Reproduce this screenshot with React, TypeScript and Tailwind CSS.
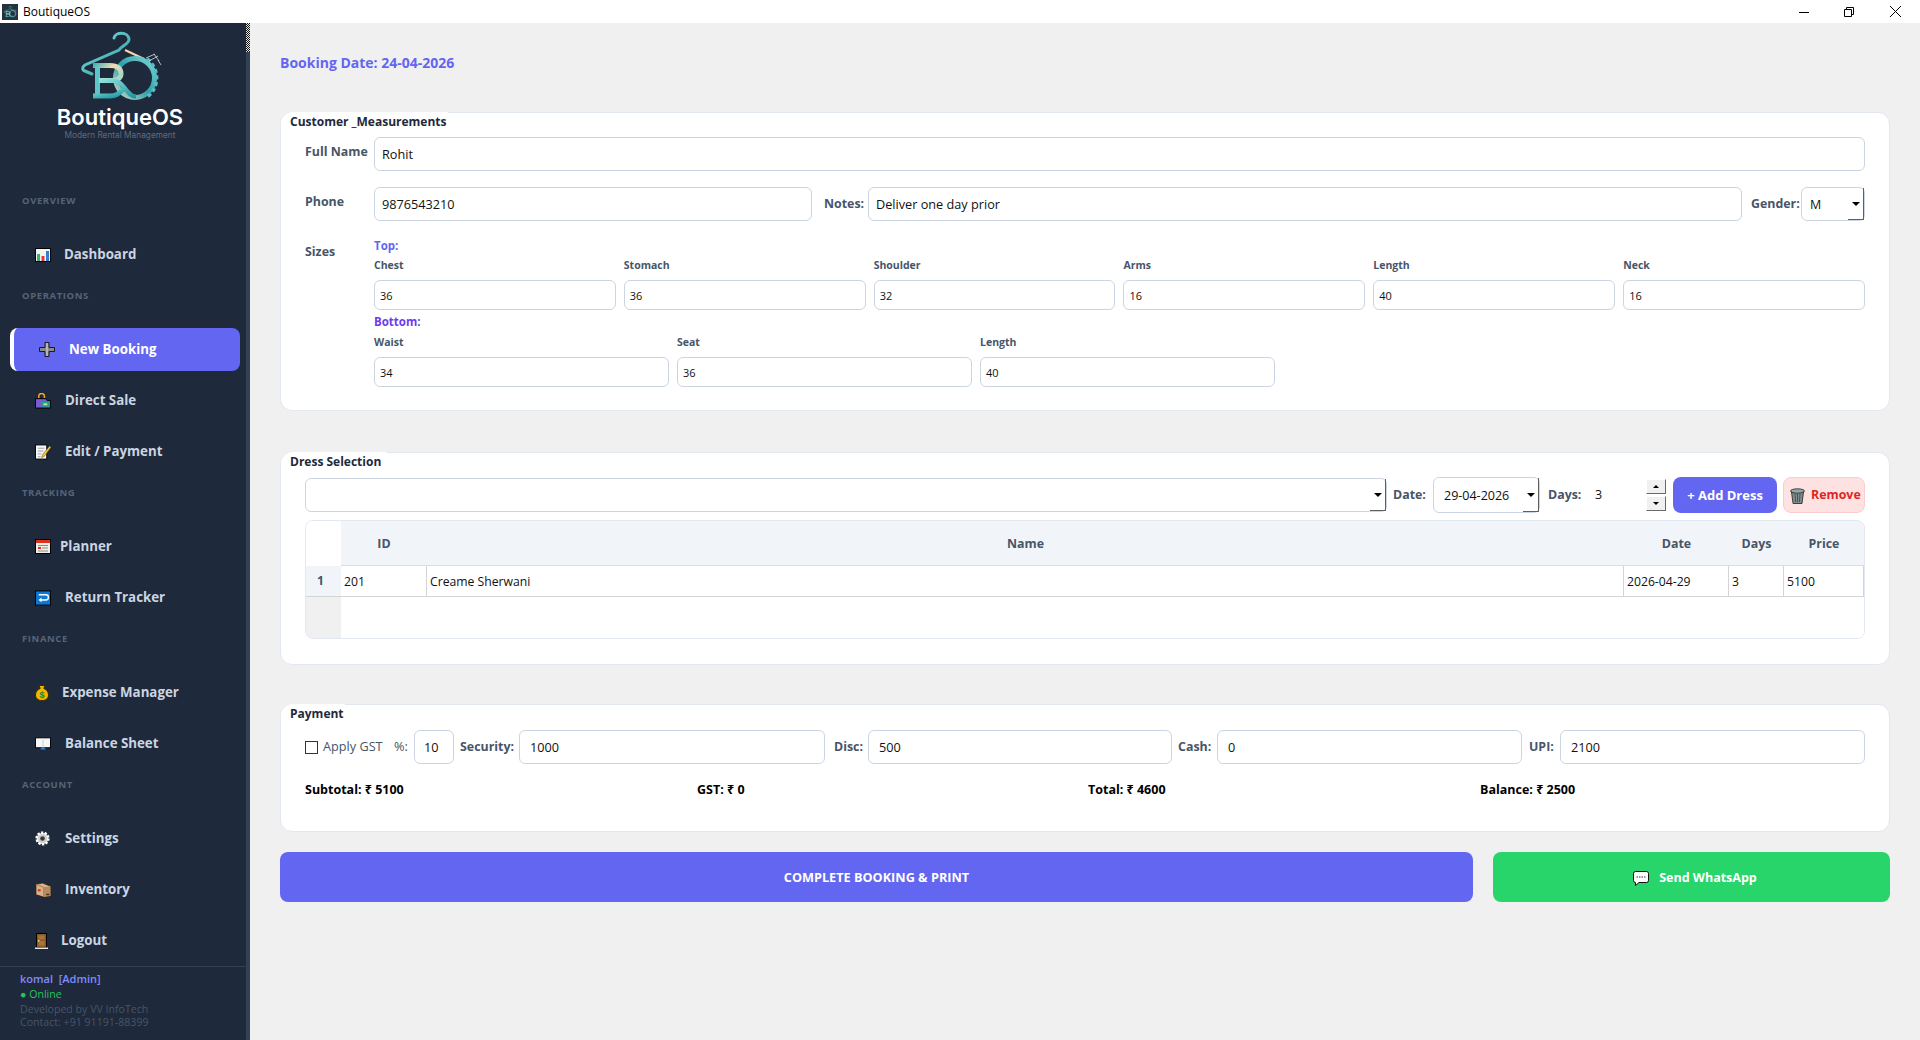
import type { ReactNode } from "react";

// small hand drawn glyphs, Windows style emoji at 16px
const DashboardIcon = () => (
  <svg width="16" height="14" viewBox="0 0 16 14">
    <rect x="0.5" y="0.5" width="15" height="13" fill="#f4f4f4" stroke="#000" />
    <rect x="2" y="6" width="3" height="7" fill="#2eb872" />
    <rect x="6.5" y="8" width="3" height="5" fill="#e53935" />
    <rect x="11" y="3" width="3" height="10" fill="#2f7fd6" />
  </svg>
);
const PlusIcon = () => (
  <svg width="16" height="15" viewBox="0 0 16 15">
    <path d="M6 0.5h4v5h5.5v4H10v5H6v-5H0.5v-4H6z" fill="#8a8a8a" stroke="#1a1a1a" />
    <rect x="7" y="1" width="2" height="13" fill="#b5b5b5" />
  </svg>
);
const BagIcon = () => (
  <svg width="17" height="16" viewBox="0 0 17 16">
    <path d="M4 5V3a3 3 0 0 1 6 0v2" fill="none" stroke="#f5a623" strokeWidth="1.6" />
    <path d="M0.5 5.5H11l2 2 3.5 0V15.5H0.5z" fill="#7a5bd0" stroke="#000" />
    <rect x="7" y="9" width="8" height="5" fill="#1aa58c" />
    <rect x="9" y="10.5" width="4" height="2" fill="#b8e986" />
  </svg>
);
const MemoIcon = () => (
  <svg width="17" height="16" viewBox="0 0 17 16">
    <rect x="0.5" y="0.5" width="12" height="15" fill="#f7f7f7" stroke="#000" />
    <path d="M3 4h7M3 7h6M3 10h4M3 13h3" stroke="#9b9b9b" />
    <path d="M15.5 1.5 8 11l-1 3 3-1.5L17 3z" fill="#f5c242" stroke="#5a4200" strokeWidth="0.5" />
  </svg>
);
const CalendarIcon = () => (
  <svg width="16" height="15" viewBox="0 0 16 15">
    <rect x="0.5" y="0.5" width="15" height="14" fill="#f4efe6" stroke="#000" />
    <rect x="1" y="1" width="14" height="3" fill="#e0301e" />
    <path d="M3 6.5h10M7 9h6M3 12h10" stroke="#8c8c8c" />
    <rect x="3" y="8" width="3" height="2" fill="#e0301e" />
  </svg>
);
const ReturnIcon = () => (
  <svg width="17" height="16" viewBox="0 0 17 16">
    <rect x="0.5" y="0.5" width="16" height="15" fill="#0b78d6" stroke="#000" />
    <path d="M4 4.5h7.5a2.8 2.8 0 0 1 0 5.6H5" fill="none" stroke="#fff" strokeWidth="1.5" />
    <path d="M7 7.6 3.8 10.1 7 12.6z" fill="#fff" />
  </svg>
);
const MoneyIcon = () => (
  <svg width="14" height="16" viewBox="0 0 14 16">
    <path d="M4 0.5h6L8.8 3.5c3 1 4.7 3.5 4.7 6.5 0 3.5-2.7 5.5-6.5 5.5S0.5 13.500 0.5 10c0-3 1.7-5.5 4.7-6.5z" fill="#f4b400" stroke="#3a2a00" />
    <text x="7" y="13" textAnchor="middle" fontSize="9" fontWeight="700" fill="#0b8a3a" fontFamily="Liberation Sans, sans-serif">$</text>
  </svg>
);
const BookIcon = () => (
  <svg width="17" height="13" viewBox="0 0 17 13">
    <rect x="0.5" y="0.5" width="16" height="10.5" fill="#f8f8f8" stroke="#000" />
    <rect x="6" y="11" width="5" height="2" fill="#2f7fd6" />
    <path d="M8.5 1v10" stroke="#d0d0d0" />
  </svg>
);
const GearIcon = () => (
  <svg width="15" height="15" viewBox="0 0 15 15">
    <circle cx="7.5" cy="7.5" r="5.8" fill="#dcdcdc" stroke="#fff" strokeWidth="2.6" strokeDasharray="2.2 1.4" />
    <circle cx="7.5" cy="7.5" r="4.6" fill="#cfcfcf" />
    <circle cx="7.5" cy="7.5" r="2.3" fill="#3a3a3a" />
  </svg>
);
const BoxIcon = () => (
  <svg width="17" height="16" viewBox="0 0 17 16">
    <path d="M1 2 8 0.5 16.5 4v10.5L9 15.5 1 13z" fill="#d9b48a" stroke="#2b1c0c" strokeWidth="0.8" />
    <path d="M1 2 9 5v10.5" fill="none" stroke="#a67c52" />
    <path d="M9 5 16.5 4v10.5L9 15.5z" fill="#b88b5e" />
    <rect x="3" y="7" width="3" height="2.5" fill="#e0304a" />
    <rect x="12" y="12" width="3" height="1.5" fill="#3d2a18" />
  </svg>
);
const DoorIcon = () => (
  <svg width="13" height="16" viewBox="0 0 13 16">
    <rect x="1.5" y="0.5" width="10" height="14" fill="#8b5a2b" stroke="#000" />
    <rect x="3.5" y="2.5" width="6" height="4" fill="#a9743c" />
    <rect x="3.5" y="8" width="6" height="4.5" fill="#a9743c" />
    <rect x="3" y="7" width="1.5" height="1.5" fill="#f5d76e" />
    <rect x="0" y="14.5" width="13" height="1.5" fill="#e8e8e8" />
  </svg>
);
const TrashIcon = () => (
  <svg width="15" height="16" viewBox="0 0 15 16">
    <path d="M1.5 4 3 15.5h9L13.5 4z" fill="#7f8c8d" stroke="#222" strokeWidth="0.8" />
    <ellipse cx="7.5" cy="3" rx="7" ry="2.2" fill="#95a5a6" stroke="#222" strokeWidth="0.8" />
    <path d="M5 6l.6 8M7.5 6v8M10 6l-.6 8" stroke="#3c4748" strokeWidth="0.8" />
  </svg>
);
const ChatIcon = () => (
  <svg width="16" height="15" viewBox="0 0 16 15">
    <path d="M2.5 0.5h11a2 2 0 0 1 2 2v7a2 2 0 0 1-2 2H6L2.5 14.5v-3a2 2 0 0 1-2-2v-7a2 2 0 0 1 2-2z" fill="#fff" stroke="#111" />
    <path d="M3.5 6h9" stroke="#333" strokeDasharray="1.5 1" />
  </svg>
);

const LogoMark = ({ className }: { className?: string }) => (
  <svg className={className} viewBox="76 28 92 74" fill="none">
    <defs>
      <linearGradient id="teal" x1="0" y1="0" x2="1" y2="1">
        <stop offset="0" stopColor="#8be3dc" />
        <stop offset="1" stopColor="#1f96a3" />
      </linearGradient>
      <linearGradient id="gold" x1="0" y1="0" x2="1" y2="0.6">
        <stop offset="0" stopColor="#3fb7bb" />
        <stop offset="0.55" stopColor="#f0dcb4" />
        <stop offset="1" stopColor="#a8d8c8" />
      </linearGradient>
      <linearGradient id="ring" x1="0" y1="1" x2="1" y2="0">
        <stop offset="0" stopColor="#c9d6bd" />
        <stop offset="0.5" stopColor="#2f9fac" />
        <stop offset="1" stopColor="#7fd8d6" />
      </linearGradient>
    </defs>
    {/* hanger */}
    <path d="M113 38c1-6 14-7 15 1 .6 5-7 6-10 11L84 65c-3 2-3 5 0 6l7 3" stroke="url(#teal)" strokeWidth="3" strokeLinecap="round" />
    <path d="M124 50l19 9" stroke="#ecd5a6" strokeWidth="2.4" />
    {/* O with gear teeth */}
    <circle cx="134" cy="78" r="19.5" stroke="url(#ring)" strokeWidth="5" />
    <path d="M146 59a23.5 23.5 0 0 1 0 38" stroke="#58bcc2" strokeWidth="3.5" strokeDasharray="4 2.5" />
    <path d="M145 58l9-4M148 61l9-5M153 54l5 7M157 60l3 5" stroke="#d7e6e6" strokeWidth="0.8" />
    {/* B, the lower bowl runs on into the O */}
    <path d="M96.500 64v33" stroke="#5cc6c8" strokeWidth="5" />
    <path d="M92 65.500h17c8 0 11 4 11 8 0 4-3 7-9 7H98" stroke="url(#gold)" strokeWidth="5" />
    <path d="M98 80.500h13c6 0 9 3 13 8 3 4 6 8 11 8" stroke="url(#teal)" strokeWidth="4.500" />
    <path d="M92 96h17c6 0 9-2 13-7" stroke="url(#teal)" strokeWidth="5" />
  </svg>
);

const AppIcon = () => (
  <div className="w-[16px] h-[16px] bg-[#26333f] flex items-center justify-center">
    <LogoMark className="w-[15px] h-[13px]" />
  </div>
);

const Arrow = () => (
  <span className="w-0 h-0 border-l-[4px] border-r-[4px] border-t-[4px] border-l-transparent border-r-transparent border-t-black" />
);

// Qt draws a raised corner around the drop-down arrow
const DropDown = () => (
  <span className="absolute right-0 top-0 bottom-0 w-[16px] border-r border-b border-[#5f5f5f] rounded-br-[1px] flex items-center justify-center">
    <Arrow />
  </span>
);

function Field({ value, className = "", pad = "pl-[7px]", size = "text-[12.7px]" }: { value?: string; className?: string; pad?: string; size?: string }) {
  return (
    <div className={`flex items-center bg-white border border-[#cbd5e1] rounded-[6px] pt-[2px] text-[#111] ${size} ${pad} ${className}`}>
      {value}
    </div>
  );
}

function Combo({ value, className = "", pad = "pl-[7px]" }: { value?: string; className?: string; pad?: string }) {
  return (
    <div className={`relative flex items-center bg-white border border-[#cbd5e1] rounded-[6px] pt-[2px] text-[12.5px] text-[#111] ${pad} ${className}`}>
      {value}
      <DropDown />
    </div>
  );
}

function Measure({ label, value }: { label: string; value: string }) {
  return (
    <div>
      <div className="h-[14px] leading-[14px] text-[10.5px] font-bold text-[#475569]">{label}</div>
      <Field value={value} pad="pl-[5px]" size="text-[11px]" className="h-[30px] mt-[8px]" />
    </div>
  );
}

function Card({ title, titleWidth, children, className = "" }: { title: string; titleWidth: string; children: ReactNode; className?: string }) {
  return (
    <section className={`bg-white border border-[#e2e8f0] rounded-[12px] ${className}`}>
      <div className={`relative -mt-px h-[17px] pl-[9px] leading-[19px] bg-white rounded-tl-[12px] text-[12px] font-bold text-[#1e293b] ${titleWidth}`}>
        {title}
      </div>
      {children}
    </section>
  );
}

const Lbl = ({ children, className = "" }: { children: ReactNode; className?: string }) => (
  <span className={`text-[12.4px] font-bold text-[#475569] whitespace-nowrap ${className}`}>{children}</span>
);

const navGroups: { label?: string; items: { name: string; icon: ReactNode; gap: string; active?: boolean }[] }[] = [
  { label: "OVERVIEW", items: [{ name: "Dashboard", icon: <DashboardIcon />, gap: "gap-[13px]" }] },
  {
    label: "OPERATIONS",
    items: [
      { name: "New Booking", icon: <PlusIcon />, gap: "gap-[14px]", active: true },
      { name: "Direct Sale", icon: <BagIcon />, gap: "gap-[14px]" },
      { name: "Edit / Payment", icon: <MemoIcon />, gap: "gap-[14px]" },
    ],
  },
  {
    label: "TRACKING",
    items: [
      { name: "Planner", icon: <CalendarIcon />, gap: "gap-[9px]" },
      { name: "Return Tracker", icon: <ReturnIcon />, gap: "gap-[14px]" },
    ],
  },
  {
    label: "FINANCE",
    items: [
      { name: "Expense Manager", icon: <MoneyIcon />, gap: "gap-[11px]" },
      { name: "Balance Sheet", icon: <BookIcon />, gap: "gap-[14px]" },
    ],
  },
  {
    label: "ACCOUNT",
    items: [
      { name: "Settings", icon: <GearIcon />, gap: "gap-[14px]" },
      { name: "Inventory", icon: <BoxIcon />, gap: "gap-[14px]" },
      { name: "Logout", icon: <DoorIcon />, gap: "gap-[10px]" },
    ],
  },
];

function Sidebar() {
  return (
    <aside className="w-[246px] h-full shrink-0 flex flex-col bg-[#1e293b]">
      <div className="h-[171px] shrink-0 w-[240px] flex flex-col items-center pt-[5px]">
        <LogoMark className="w-[92px] h-[74px] ml-[6px]" />
        <div className="font-['Inter',sans-serif] font-semibold text-[22px] leading-[26px] text-white mt-[2px]">BoutiqueOS</div>
        <div className="font-['Inter',sans-serif] text-[8.3px] leading-[10px] text-[#5f6b7c]">Modern Rental Management</div>
      </div>

      <nav className="flex-1 min-h-0 overflow-hidden flex flex-col">
        {navGroups.map((group) => (
          <div key={group.label} className="shrink-0 flex flex-col">
            <div className={`h-[14px] leading-[14px] pl-[22px] mb-[25px] text-[9.5px] font-bold tracking-[0.6px] text-[#566479] ${group.label === "OVERVIEW" ? "" : "mt-[5px]"}`}>
              {group.label}
            </div>
            {group.items.map((item) => (
              <a
                key={item.name}
                className={`ml-[10px] mr-[6px] mb-[8px] h-[43px] flex items-center pl-[25px] rounded-[8px] text-[13.3px] font-bold ${item.gap} ${
                  item.active ? "bg-[#6366f1] text-white border-l-4 border-white" : "text-[#cbd5e1]"
                }`}
              >
                <span className="w-[16px] flex justify-start shrink-0">{item.icon}</span>
                {item.name}
              </a>
            ))}
          </div>
        ))}
      </nav>

      <footer className="h-[74px] shrink-0 border-t border-[#334155] pl-[20px] pt-[5px] text-[10.6px] leading-[14px]">
        <div className="text-[#818cf8] font-semibold text-[11px]">komal&nbsp; [Admin]</div>
        <div className="text-[#22c55e] mt-[1px]">● Online</div>
        <div className="text-[#475569] mt-[1px]">Developed by VV InfoTech</div>
        <div className="text-[#475569] mt-[-1px]">Contact: +91 91191-88399</div>
      </footer>
    </aside>
  );
}

const tableCols = "grid grid-cols-[35px_86px_1197px_105px_55px_80px_1fr]";

function DressTable() {
  return (
    <div className="mt-[7px] h-[119px] border border-[#e2e8f0] rounded-[8px] overflow-hidden flex flex-col">
      <div className={`${tableCols} h-[45px] text-[12.4px] font-bold text-[#475569]`}>
        <div className="bg-white" />
        {["ID", "Name", "Date", "Days", "Price"].map((h) => (
          <div key={h} className="bg-[#f1f5f9] flex items-center justify-center border-b border-[#d9dee5] pt-[2px]">
            {h}
          </div>
        ))}
        <div className="bg-[#f1f5f9] border-b border-[#d9dee5]" />
      </div>
      <div className={`${tableCols} h-[31px] text-[12.2px] text-[#111] border-b border-[#d4d4d4]`}>
        <div className="bg-[#f1f5f9] flex items-center justify-center font-bold text-[#475569] pr-[6px]">1</div>
        {["201", "Creame Sherwani", "2026-04-29", "3", "5100"].map((c) => (
          <div key={c} className="flex items-center pl-[3px] pt-[2px] border-r border-[#d4d4d4]">
            {c}
          </div>
        ))}
      </div>
      <div className="flex-1 flex">
        <div className="w-[35px] bg-[#f0f0f0]" />
        <div className="flex-1 bg-white" />
      </div>
    </div>
  );
}

export default function App() {
  return (
    <div className="w-[1920px] h-[1040px] overflow-hidden flex flex-col bg-[#f0f0f0] font-['Open_Sans','Noto_Sans',sans-serif]">
      {/* window title bar */}
      <header className="h-[23px] shrink-0 bg-white flex items-center pl-[2px] text-[12px] text-black">
        <AppIcon />
        <span className="ml-[5px]">BoutiqueOS</span>
        <div className="ml-auto flex items-center pr-[2px]">
          <button className="w-[45px] h-[23px] flex items-center justify-center">
            <svg width="10" height="10" viewBox="0 0 10 10"><path d="M0 5.5h10" stroke="#000" /></svg>
          </button>
          <button className="w-[46px] h-[23px] flex items-center justify-center">
            <svg width="10" height="10" viewBox="0 0 10 10" fill="none"><path d="M0.5 2.5h7v7h-7zM2.5 2.5v-2h7v7h-2" stroke="#000" /></svg>
          </button>
          <button className="w-[46px] h-[23px] flex items-center justify-center">
            <svg width="11" height="11" viewBox="0 0 11 11"><path d="M0 0l11 11M11 0 0 11" stroke="#000" /></svg>
          </button>
        </div>
      </header>

      <div className="flex-1 flex min-h-0">
        <Sidebar />
        {/* sidebar scrollbar */}
        <div className="w-[4px] shrink-0 bg-[#334155]">
          <div className="h-[29px] bg-[repeating-conic-gradient(#111_0_25%,#e5e5e5_0_50%)] bg-[length:2px_2px]" />
        </div>

        <main className="flex-1 min-w-0 pl-[30px] pr-[30px] pt-[30px]">
          <div className="h-[20px] leading-[20px] mb-[39px] text-[14px] font-bold text-[#6366f1]">Booking Date: 24-04-2026</div>

          <Card title="Customer _Measurements" titleWidth="w-[167px]" className="h-[299px]">
            <div className="pl-[24px] pr-[24px] pt-[8px]">
              <div className="flex h-[34px]">
                <Lbl className="w-[69px] leading-[30px]">Full Name</Lbl>
                <Field value="Rohit" className="flex-1" />
              </div>
              <div className="flex items-center h-[34px] mt-[16px]">
                <Lbl className="w-[69px] leading-[30px] self-start">Phone</Lbl>
                <Field value="9876543210" className="w-[438px] h-full" />
                <Lbl className="ml-[12px] w-[44px] pt-[1px]">Notes:</Lbl>
                <Field value="Deliver one day prior" className="w-[874px] h-full" />
                <Lbl className="ml-[9px] w-[50px] pt-[1px]">Gender:</Lbl>
                <Combo value="M" pad="pl-[8px]" className="flex-1 h-full" />
              </div>
              <div className="flex mt-[18px]">
                <Lbl className="w-[69px] mt-[6px] leading-[14px]">Sizes</Lbl>
                <div className="flex-1 min-w-0">
                  <div className="h-[14px] leading-[14px] mb-[5px] text-[11.5px] font-bold text-[#6366f1]">Top:</div>
                  <div className="grid grid-cols-6 gap-x-[8px]">
                    <Measure label="Chest" value="36" />
                    <Measure label="Stomach" value="36" />
                    <Measure label="Shoulder" value="32" />
                    <Measure label="Arms" value="16" />
                    <Measure label="Length" value="40" />
                    <Measure label="Neck" value="16" />
                  </div>
                  <div className="h-[14px] leading-[14px] mt-[5px] mb-[6px] text-[11.5px] font-bold text-[#6d3bf0]">Bottom:</div>
                  <div className="grid grid-cols-[295px_295px_295px] gap-x-[8px]">
                    <Measure label="Waist" value="34" />
                    <Measure label="Seat" value="36" />
                    <Measure label="Length" value="40" />
                  </div>
                </div>
              </div>
            </div>
          </Card>

          <Card title="Dress Selection" titleWidth="w-[105px]" className="h-[213px] mt-[41px]">
            <div className="pl-[24px] pr-[24px] pt-[8px]">
              <div className="flex items-center h-[36px]">
                <Combo className="w-[1082px] h-[34px]" />
                <Lbl className="ml-[6px] w-[40px] pt-[1px]">Date:</Lbl>
                <Combo value="29-04-2026" pad="pl-[10px]" className="w-[107px] h-[36px]" />
                <Lbl className="ml-[8px] w-[47px] pt-[1px]">Days:</Lbl>
                <span className="w-[51px] pt-[1px] text-[12.5px] text-[#111]">3</span>
                <div className="w-[20px] flex flex-col gap-[2px]">
                  <button className="h-[15px] bg-[#f0f0f0] border-t border-l border-white border-r border-b border-r-[#696969] border-b-[#696969] flex items-center justify-center">
                    <span className="w-0 h-0 border-l-[3px] border-r-[3px] border-b-[3px] border-l-transparent border-r-transparent border-b-black" />
                  </button>
                  <button className="h-[15px] bg-[#f0f0f0] border-t border-l border-white border-r border-b border-r-[#696969] border-b-[#696969] flex items-center justify-center">
                    <span className="w-0 h-0 border-l-[3px] border-r-[3px] border-t-[3px] border-l-transparent border-r-transparent border-t-black" />
                  </button>
                </div>
                <button className="ml-[7px] w-[104px] h-[36px] pt-[1px] rounded-[8px] bg-[#6366f1] text-white text-[13px] font-bold">+ Add Dress</button>
                <button className="ml-[6px] flex-1 h-[36px] pt-[1px] rounded-[8px] bg-[#fee2e2] border border-[#fecaca] text-[#dc2626] text-[12.4px] font-bold flex items-center gap-[6px] pl-[6px]">
                  <TrashIcon />
                  Remove
                </button>
              </div>
              <DressTable />
            </div>
          </Card>

          <Card title="Payment" titleWidth="w-[64px]" className="h-[128px] mt-[39px]">
            <div className="pl-[24px] pr-[24px] pt-[9px]">
              <div className="flex items-center h-[34px]">
                <span className="w-[13px] h-[13px] border border-[#333] bg-white shrink-0" />
                <span className="ml-[5px] w-[71px] text-[12.7px] text-[#475569]">Apply GST</span>
                <span className="w-[20px] text-[12.7px] text-[#475569]">%:</span>
                <Field value="10" pad="pl-[9px]" className="w-[40px] h-full" />
                <Lbl className="ml-[6px] w-[59px]">Security:</Lbl>
                <Field value="1000" pad="pl-[10px]" className="w-[306px] h-full" />
                <Lbl className="ml-[9px] w-[34px]">Disc:</Lbl>
                <Field value="500" pad="pl-[10px]" className="w-[304px] h-full" />
                <Lbl className="ml-[6px] w-[39px]">Cash:</Lbl>
                <Field value="0" pad="pl-[10px]" className="w-[305px] h-full" />
                <Lbl className="ml-[7px] w-[31px]">UPI:</Lbl>
                <Field value="2100" pad="pl-[10px]" className="flex-1 h-full" />
              </div>
              <div className="grid grid-cols-[392px_391px_392px_1fr] mt-[18px] h-[16px] leading-[16px] text-[12.5px] font-bold text-black">
                <span>Subtotal: ₹ 5100</span>
                <span>GST: ₹ 0</span>
                <span>Total: ₹ 4600</span>
                <span>Balance: ₹ 2500</span>
              </div>
            </div>
          </Card>

          <div className="flex gap-[20px] mt-[20px] h-[50px]">
            <button className="w-[1193px] pt-[2px] rounded-[8px] bg-[#6366f1] text-white text-[12.7px] font-bold">COMPLETE BOOKING &amp; PRINT</button>
            <button className="flex-1 pt-[2px] pl-[7px] rounded-[8px] bg-[#28d56b] text-white text-[12.5px] font-bold flex items-center justify-center gap-[10px]">
              <ChatIcon />
              Send WhatsApp
            </button>
          </div>
        </main>
      </div>
    </div>
  );
}
